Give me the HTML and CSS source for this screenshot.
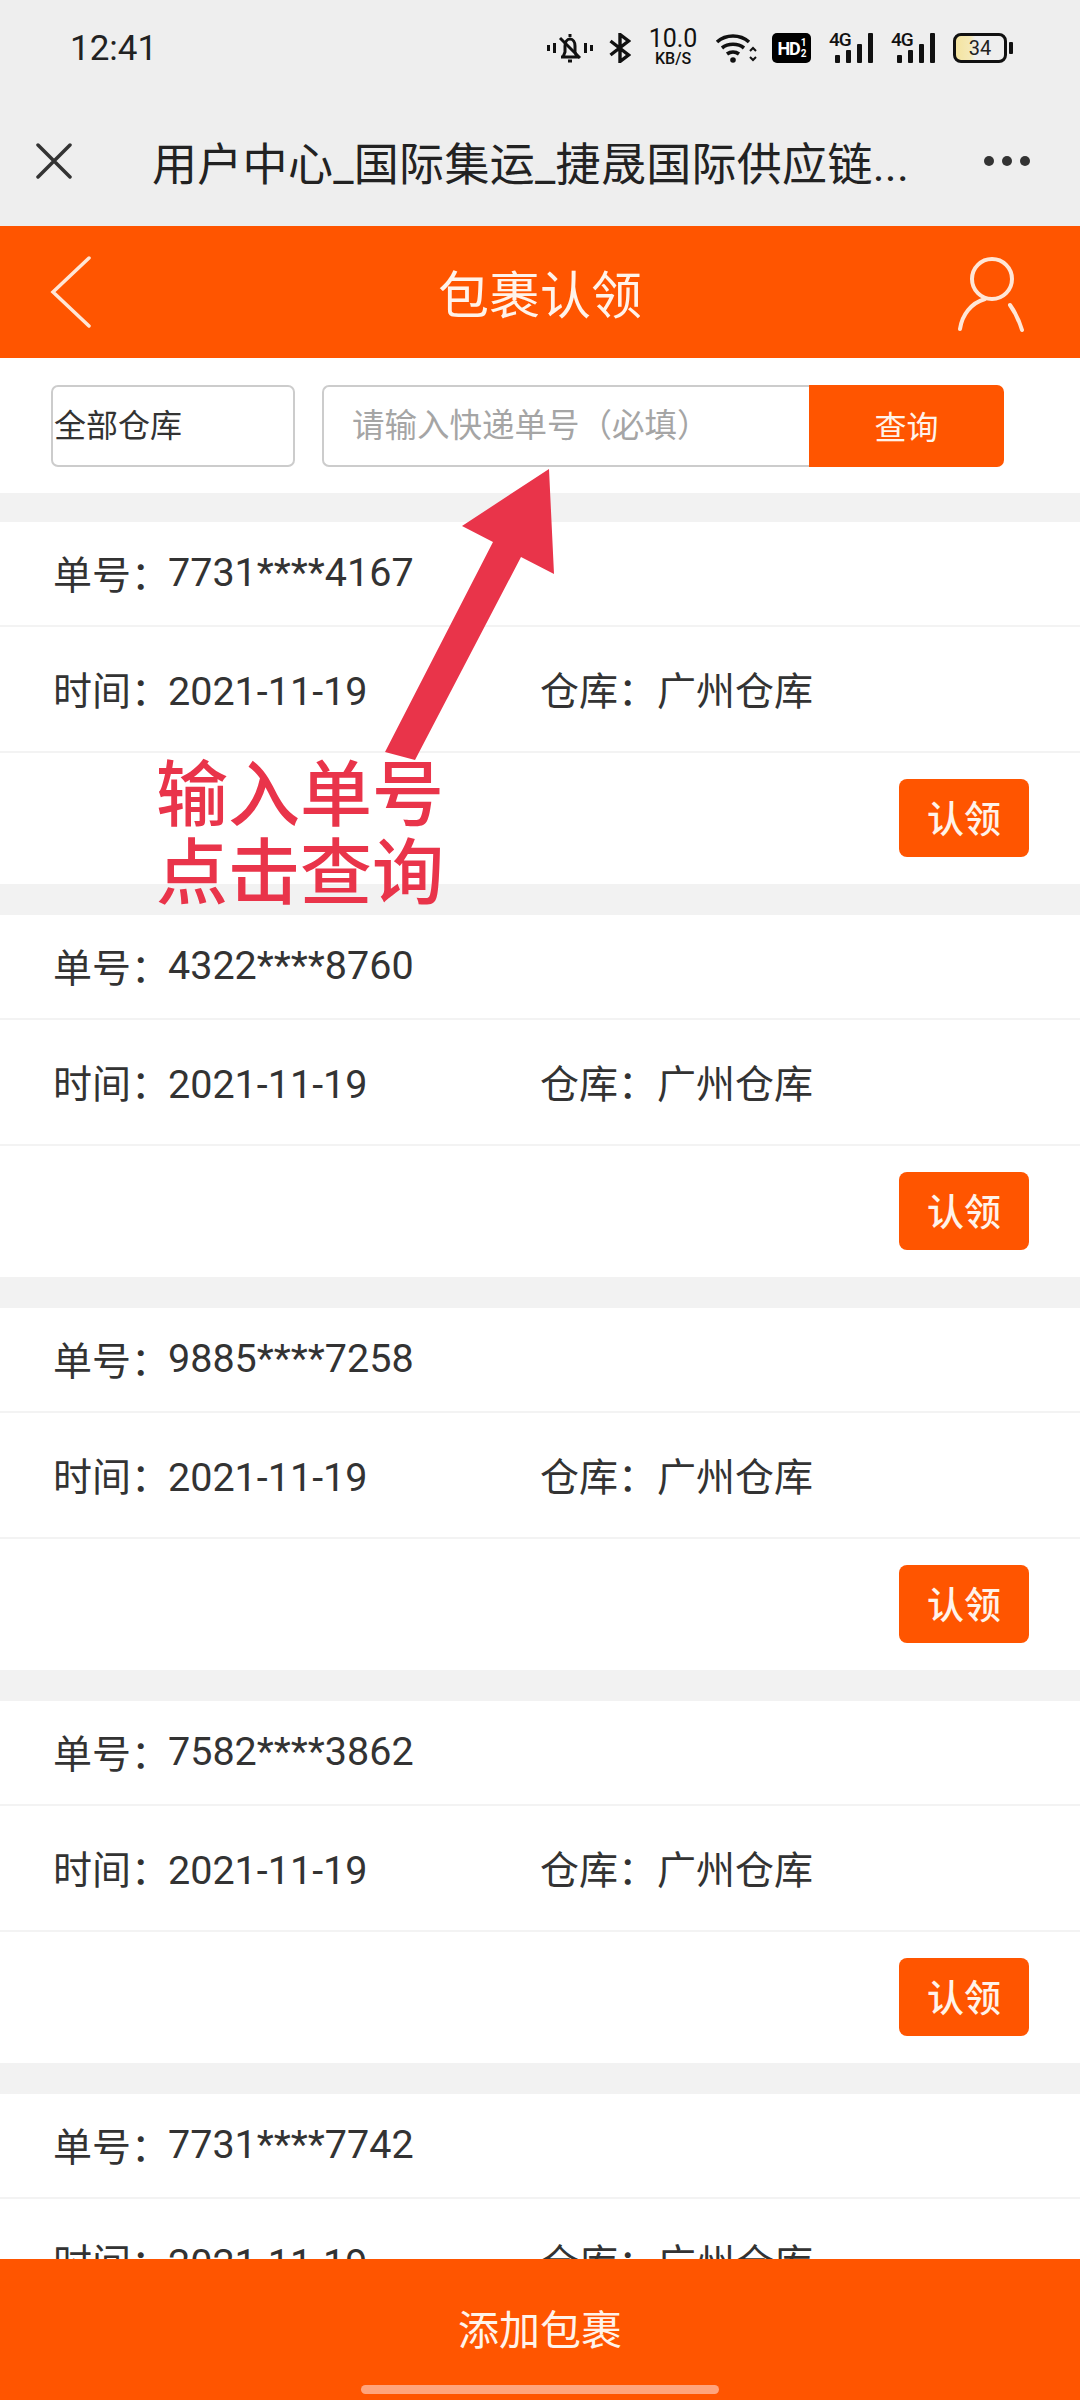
FILE: index.html
```html
<!DOCTYPE html>
<html lang="zh-CN">
<head>
    <meta charset="utf-8">
    <title>包裹认领</title>
    <link rel="stylesheet" href="styles.css">
</head>
<body>
    <!-- 状态栏 -->
    <div class="status-bar">
        <span class="time">12:41</span>
        <div class="status-icons">
            <svg class="ic-bell" width="46" height="30" viewBox="0 0 46 30" fill="none" stroke="#111" stroke-width="3">
                <path d="M1.5 12v6M7.5 10v10M38.5 10v10M44.5 12v6" />
                <path d="M14 24h18M16 24l2-5v-6c0-4 2-7 5-7s5 3 5 7v6l2 5" />
                <path d="M23 1v3M21 28h4" />
                <path d="M13 5l20 20" />
            </svg>
            <svg class="ic-bt" width="22" height="30" viewBox="0 0 22 30" fill="none" stroke="#111" stroke-width="3.4">
                <path d="M1.5 8l18 14-8.500 6.500V1.500L19.500 8 1.500 22" />
            </svg>
            <div class="speed"><span class="speed-num">10.0</span><span class="speed-unit">KB/S</span></div>
            <svg class="ic-wifi" width="42" height="30" viewBox="0 0 42 30" fill="none" stroke="#111" stroke-width="3.600">
                <path d="M2 9c9-8 23-8 32 0M7 15c6-5 16-5 22 0M12 21c3.500-2.500 8.500-2.500 12 0" />
                <circle cx="18" cy="27" r="2.800" fill="#111" stroke="none" />
                <path d="M35 18l3-3 3 3M35 24l3 3 3-3" stroke-width="2" />
            </svg>
            <div class="hd"><span>HD</span><span class="hd-sub">1<br>2</span></div>
            <div class="signal"><span class="net">4G</span><i class="b1"></i><i class="b2"></i><i class="b3"></i><i class="b4"></i></div>
            <div class="signal"><span class="net">4G</span><i class="b1"></i><i class="b2"></i><i class="b3"></i><i class="b4"></i></div>
            <div class="battery"><span class="battery-num">34</span></div>
        </div>
    </div>

    <!-- 浏览器标题栏 -->
    <div class="browser-bar">
        <svg class="close-icon" width="36" height="36" viewBox="0 0 36 36" stroke="#333" stroke-width="3.500" stroke-linecap="round">
            <path d="M2 2l32 32M34 2L2 34" />
        </svg>
        <div class="browser-title">用户中心_国际集运_捷晟国际供应链...</div>
        <div class="more"><i></i><i></i><i></i></div>
    </div>

    <div class="header">
        <svg class="back" width="42" height="72" viewBox="0 0 42 72" fill="none" stroke="#ffe6d6" stroke-width="3.500" stroke-linecap="round">
            <path d="M39 2L3 36l36 34" />
        </svg>
        <div class="header-title">包裹认领</div>
        <svg class="user" width="72" height="80" viewBox="0 0 72 80" fill="none" stroke="#ffe6d6" stroke-width="4" stroke-linecap="round">
            <circle cx="36" cy="24" r="20" />
            <path d="M29 44C15 48 6 60 4 74M54 50c5 7 9 15 12 25" />
        </svg>
    </div>

    <form class="search">
        <select class="warehouse">
            <option>全部仓库</option>
        </select>
        <div class="search-group">
            <input class="search-input" type="text" placeholder="请输入快递单号（必填）">
            <button class="search-btn" type="button">查询</button>
        </div>
    </form>

    <div class="list">
        <div class="card">
            <div class="row row-no">单号：<span class="num">7731****4167</span></div>
            <div class="row row-info">
                <div class="cell">时间：<span class="num">2021-11-19</span></div>
                <div class="cell">仓库：广州仓库</div>
            </div>
            <div class="row row-action"><button class="claim" type="button">认领</button></div>
        </div>
        <div class="card">
            <div class="row row-no">单号：<span class="num">4322****8760</span></div>
            <div class="row row-info">
                <div class="cell">时间：<span class="num">2021-11-19</span></div>
                <div class="cell">仓库：广州仓库</div>
            </div>
            <div class="row row-action"><button class="claim" type="button">认领</button></div>
        </div>
        <div class="card">
            <div class="row row-no">单号：<span class="num">9885****7258</span></div>
            <div class="row row-info">
                <div class="cell">时间：<span class="num">2021-11-19</span></div>
                <div class="cell">仓库：广州仓库</div>
            </div>
            <div class="row row-action"><button class="claim" type="button">认领</button></div>
        </div>
        <div class="card">
            <div class="row row-no">单号：<span class="num">7582****3862</span></div>
            <div class="row row-info">
                <div class="cell">时间：<span class="num">2021-11-19</span></div>
                <div class="cell">仓库：广州仓库</div>
            </div>
            <div class="row row-action"><button class="claim" type="button">认领</button></div>
        </div>
        <div class="card">
            <div class="row row-no">单号：<span class="num">7731****7742</span></div>
            <div class="row row-info">
                <div class="cell">时间：<span class="num">2021-11-19</span></div>
                <div class="cell">仓库：广州仓库</div>
            </div>
        </div>
    </div>

    <!-- 红色标注 -->
    <svg class="arrow" width="180" height="300" viewBox="380 465 180 300">
        <polygon points="549,469 462,526 493,542 385,752 415,760 521,557 554,574" fill="#e9344a" />
    </svg>
    <div class="note">输入单号<br>点击查询</div>

    <div class="footer">
        <span>添加包裹</span>
        <div class="home-bar"></div>
    </div>
</body>
</html>
```

FILE: styles.css
```css
* {
    box-sizing: border-box;
}

html, body {
    margin: 0;
    padding: 0;
}

body {
    position: relative;
    width: 1080px;
    height: 2400px;
    overflow: hidden;
    background: #fff;
    color: #333;
    font-family: Roboto, "Noto Sans CJK SC", sans-serif;
}

.status-bar {
    display: flex;
    align-items: center;
    justify-content: space-between;
    height: 96px;
    padding: 0 68px 0 70px;
    background: #eee;
    color: #111;
}

.time {
    font-size: 35px;
    color: #222;
}

.status-icons {
    display: flex;
    align-items: center;
    height: 32px;
}

.ic-bell {
    margin-right: 16px;
}

.ic-bt {
    margin-right: 18px;
}

.speed {
    display: flex;
    flex-direction: column;
    align-items: center;
    width: 48px;
    margin-top: -3px;
    margin-right: 18px;
}

.speed-num {
    font-size: 25px;
    line-height: 24px;
}

.speed-unit {
    font-size: 16px;
    font-weight: 500;
    line-height: 15px;
}

.ic-wifi {
    margin-right: 15px;
}

.hd {
    display: flex;
    align-items: center;
    justify-content: center;
    width: 39px;
    height: 30px;
    margin-right: 18px;
    border-radius: 5px;
    background: #000;
    color: #fff;
    font-size: 18px;
    font-weight: 700;
    letter-spacing: -1px;
}

.hd-sub {
    font-size: 10px;
    line-height: 11px;
    margin-left: 1px;
}

.signal {
    position: relative;
    display: flex;
    align-items: flex-end;
    gap: 6px;
    width: 44px;
    height: 30px;
    margin-right: 18px;
    padding-left: 6px;
}

.signal i {
    display: block;
    width: 5px;
    border-radius: 1px;
    background: #111;
}

.signal .b1 { height: 8px; }
.signal .b2 { height: 13px; }
.signal .b3 { height: 19px; }
.signal .b4 { height: 30px; }

.net {
    position: absolute;
    left: 0;
    top: -2px;
    font-size: 19px;
    font-weight: 500;
    line-height: 18px;
    letter-spacing: -1px;
}

.battery {
    position: relative;
    display: flex;
    align-items: center;
    justify-content: center;
    width: 54px;
    height: 30px;
    margin-right: 5px;
    border: 3px solid #111;
    border-radius: 8px;
    background: linear-gradient(90deg, #f4e4a0 0, #f4e9b8 30%, #eee 40%);
}

.battery::after {
    content: "";
    position: absolute;
    right: -9px;
    top: 6px;
    width: 4px;
    height: 12px;
    border-radius: 1px;
    background: #111;
}

.battery-num {
    font-size: 20px;
    color: #222;
}

.browser-bar {
    display: flex;
    align-items: center;
    height: 130px;
    padding: 0 50px 0 36px;
    background: #eee;
}

.browser-title {
    flex: 1;
    margin-left: 80px;
    font-size: 45px;
    letter-spacing: 0.3px;
    color: #222;
    white-space: nowrap;
}

.more {
    display: flex;
    gap: 8px;
}

.more i {
    display: block;
    width: 10px;
    height: 10px;
    border-radius: 50%;
    background: #333;
}

.header {
    display: flex;
    align-items: center;
    justify-content: space-between;
    height: 132px;
    padding: 0 52px 0 50px;
    background: #ff5500;
}

.back {
    margin-right: 32px;
}

.header-title {
    font-size: 51px;
    color: #fff3ea;
}

.user {
    margin-top: 6px;
}

.search {
    display: flex;
    gap: 27px;
    height: 135px;
    margin: 0;
    padding: 27px 0 0 51px;
}

.warehouse {
    appearance: none;
    width: 244px;
    height: 82px;
    padding: 0 1px;
    border: 2px solid #ccc;
    border-radius: 7px;
    background: #fff;
    color: #333;
    font-family: inherit;
    font-size: 32px;
}

.search-group {
    display: flex;
    height: 82px;
}

.search-input {
    width: 487px;
    height: 82px;
    padding: 0 28px;
    border: 2px solid #ccc;
    border-right: none;
    border-radius: 7px 0 0 7px;
    background: #fff;
    font-family: inherit;
    font-size: 32.5px;
    outline: none;
}

.search-input::placeholder {
    color: #a5a5a5;
}

.search-btn {
    width: 195px;
    height: 82px;
    padding: 0 0 2px;
    border: none;
    border-radius: 0 7px 7px 0;
    background: #ff5500;
    color: #fff3ea;
    font-family: inherit;
    font-size: 32px;
}

.list {
    background: #f2f2f2;
    padding-top: 29px;
}

.card {
    height: 393px;
    border-bottom: 31px solid #f2f2f2;
    background: #fff;
}

.row {
    display: flex;
    align-items: center;
    padding: 0 53px;
    font-size: 39px;
    color: #333;
}

.row-no {
    height: 105px;
    padding-bottom: 3px;
    border-bottom: 2px solid #f3f3f3;
}

.row-info {
    height: 126px;
    padding-bottom: 3px;
    border-bottom: 2px solid #f3f3f3;
}

.cell {
    width: 487px;
}

.num {
    margin-left: -2px;
    font-size: 39.5px;
}

.row-action {
    justify-content: flex-end;
    align-items: flex-end;
    height: 131px;
    padding: 0 51px 27px 0;
}

.claim {
    width: 130px;
    height: 78px;
    padding: 0 0 3px;
    border: none;
    border-radius: 8px;
    background: #ff5500;
    color: #fff3ea;
    font-family: inherit;
    font-size: 37px;
    font-weight: 500;
}

.arrow {
    position: absolute;
    left: 380px;
    top: 465px;
}

.note {
    position: absolute;
    left: 156px;
    top: 757px;
    font-size: 72px;
    font-weight: 500;
    line-height: 78px;
    color: #e9344a;
}

.footer {
    position: absolute;
    left: 0;
    bottom: 0;
    display: flex;
    justify-content: center;
    width: 100%;
    height: 141px;
    padding-top: 46px;
    background: #ff5500;
    color: #fff3ea;
    font-size: 41px;
    line-height: 52px;
}

.home-bar {
    position: absolute;
    left: 361px;
    bottom: 6px;
    width: 358px;
    height: 9px;
    border-radius: 5px;
    background: #ffa47c;
}
```
